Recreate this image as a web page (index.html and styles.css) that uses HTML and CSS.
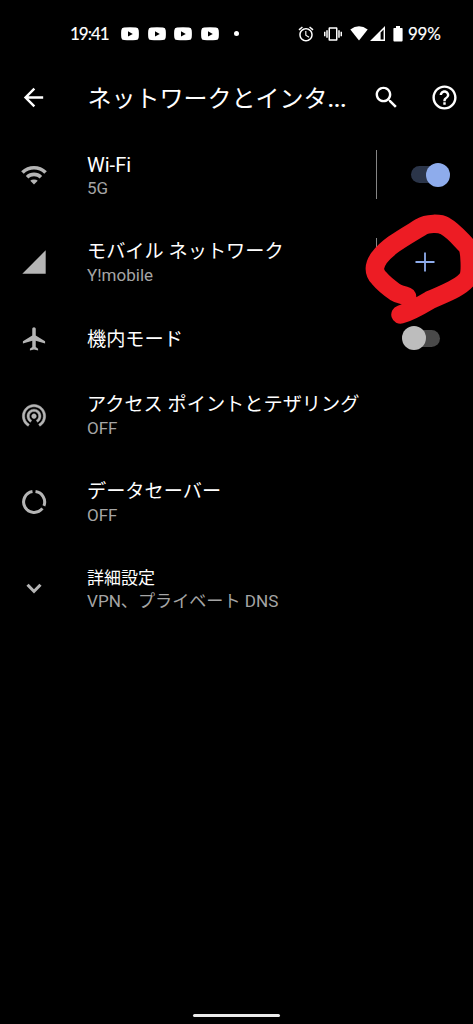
FILE: index.html
```
<!DOCTYPE html>
<html lang="ja">
<head>
<meta charset="utf-8">
<title>ネットワークとインターネット</title>
<link rel="stylesheet" href="styles.css">
</head>
<body>
<div class="screen">
  <header class="status">
    <span class="clock">19:41</span>
    <div class="notices">
      <svg class="video" viewBox="0 0 18 14"><path fill-rule="evenodd" d="M3 .6Q9 0 15 .6Q17.5.8 17.7 3.2Q18.1 7 17.7 10.4Q17.5 12.9 15 13.1Q9 13.6 3 13.1Q.5 12.9.3 10.4Q-.1 7 .3 3.2Q.5.8 3 .6ZM7 4.2V9.6L11.8 6.9Z"/></svg>
      <svg class="video" viewBox="0 0 18 14"><path fill-rule="evenodd" d="M3 .6Q9 0 15 .6Q17.5.8 17.7 3.2Q18.1 7 17.7 10.4Q17.5 12.9 15 13.1Q9 13.6 3 13.1Q.5 12.9.3 10.4Q-.1 7 .3 3.2Q.5.8 3 .6ZM7 4.2V9.6L11.8 6.9Z"/></svg>
      <svg class="video" viewBox="0 0 18 14"><path fill-rule="evenodd" d="M3 .6Q9 0 15 .6Q17.5.8 17.7 3.2Q18.1 7 17.7 10.4Q17.5 12.9 15 13.1Q9 13.6 3 13.1Q.5 12.9.3 10.4Q-.1 7 .3 3.2Q.5.8 3 .6ZM7 4.2V9.6L11.8 6.9Z"/></svg>
      <svg class="video" viewBox="0 0 18 14"><path fill-rule="evenodd" d="M3 .6Q9 0 15 .6Q17.5.8 17.7 3.2Q18.1 7 17.7 10.4Q17.5 12.9 15 13.1Q9 13.6 3 13.1Q.5 12.9.3 10.4Q-.1 7 .3 3.2Q.5.8 3 .6ZM7 4.2V9.6L11.8 6.9Z"/></svg>
    </div>
    <span class="dot"></span>
    <svg class="alarm" viewBox="0 0 24 24"><path d="M22 5.72l-4.6-3.86-1.29 1.53 4.6 3.86L22 5.72zM7.88 3.39L6.6 1.86 2 5.71l1.29 1.53 4.59-3.85zM12.5 8H11v6l4.75 2.85.75-1.23-4-2.37V8zM12 4c-4.97 0-9 4.03-9 9s4.02 9 9 9c4.97 0 9-4.03 9-9s-4.03-9-9-9zm0 16c-3.87 0-7-3.13-7-7s3.13-7 7-7 7 3.13 7 7-3.13 7-7 7z"/></svg>
    <svg class="vibrate" viewBox="0 0 24 24"><path d="M0 15h2V9H0v6zm3 2h2V7H3v10zm19-8v6h2V9h-2zm-3 8h2V7h-2v10zM16.5 3h-9C6.67 3 6 3.67 6 4.5v15c0 .83.67 1.5 1.5 1.5h9c.83 0 1.5-.67 1.5-1.5v-15c0-.83-.67-1.5-1.5-1.5zM16 19H8V5h8v14z"/></svg>
    <svg class="wifi-full" viewBox="0 0 18 15"><path d="M.3 3.5Q9-3 17.7 3.5L9 14.6Z"/></svg>
    <svg class="cell" viewBox="0 0 16 15"><path fill-rule="evenodd" d="M0 15L15 0V15ZM10.6 6.4V13.6H13.6V3.4Z"/></svg>
    <svg class="battery" viewBox="0 0 10 16"><path d="M3 0H7V2H9Q9.6 2 9.6 2.8V14.6Q9.6 15.5 8.7 15.5H1.3Q.4 15.5.4 14.6V2.8Q.4 2 1 2H3Z"/></svg>
    <span class="percent">99%</span>
  </header>

  <nav class="appbar">
    <svg class="icon back" viewBox="0 0 24 24"><path d="M20 11H7.83l5.59-5.59L12 4l-8 8 8 8 1.41-1.41L7.83 13H20v-2z"/></svg>
    <h1 class="title">ネットワークとインタ<span class="more">...</span></h1>
    <svg class="icon search" viewBox="0 0 24 24"><path d="M15.5 14h-.79l-.28-.27C15.41 12.59 16 11.11 16 9.5 16 5.91 13.09 3 9.5 3S3 5.91 3 9.5 5.91 16 9.5 16c1.61 0 3.09-.59 4.23-1.57l.27.28v.79l5 4.99L20.49 19l-4.99-5zm-6 0C7.01 14 5 11.99 5 9.5S7.01 5 9.5 5 14 7.01 14 9.5 11.99 14 9.5 14z"/></svg>
    <svg class="icon help" viewBox="0 0 24 24"><path d="M11 18h2v-2h-2v2zm1-16C6.48 2 2 6.48 2 12s4.48 10 10 10 10-4.48 10-10S17.52 2 12 2zm0 18c-4.41 0-8-3.59-8-8s3.59-8 8-8 8 3.59 8 8-3.59 8-8 8zm0-14c-2.21 0-4 1.79-4 4h2c0-1.1.9-2 2-2s2 .9 2 2c0 2-3 1.75-3 5h2c0-2.25 3-2.5 3-5 0-2.21-1.79-4-4-4z"/></svg>
  </nav>

  <main class="list">
    <section class="row">
      <svg class="icon lead" viewBox="0 0 24 24"><path d="M12 20.2L15.2 17Q14.2 15.8 12 15.8T8.800 17ZM1 8.700L3.200 10.900C8.100 6.100 15.900 6.100 20.800 10.900L23 8.700C16.900 2.700 7.100 2.700 1 8.700ZM5 12.800L7.200 15C9.900 12.400 14.100 12.400 16.800 15L19 12.800C15.100 9 8.900 9 5 12.800Z"/></svg>
      <div class="text"><div class="name latin">Wi-Fi</div><div class="sub">5G</div></div>
      <span class="divider"></span>
      <span class="switch on"><span class="knob"></span></span>
    </section>
    <section class="row mobile">
      <svg class="icon lead" viewBox="0 0 24 24"><path d="M2 22h20V2z"/></svg>
      <div class="text"><div class="name">モバイル ネットワーク</div><div class="sub">Y!mobile</div></div>
      <span class="divider"></span>
      <svg class="plus" viewBox="0 0 20 20"><path d="M10 .5V19.500M.5 10H19.500"/></svg>
      <svg class="scribble" viewBox="0 0 120 120"><path d="M54 91.500C48 89 47 90 42 87C35 82 31 79 26 73C20 67 21 60 26 53C35 41 50 33 68 22C74 18 87 18 92 21C101 26 107 34 114 41C117 46 118 67 115 73C108 83 90 89 77 95C67 101 59 106 47.500 109.500"/></svg>
    </section>
    <section class="row short">
      <svg class="icon lead" viewBox="0 0 24 24"><path d="M21.500 15.900v-2l-8-5V3.400c0-.83-.67-1.500-1.500-1.500s-1.500.67-1.500 1.500v5.500l-8 5v2l8-2.500v5.500l-2 1.500v1.500l3.500-1 3.500 1v-1.500l-2-1.500v-5.500l8 2.500z"/></svg>
      <div class="text"><div class="name">機内モード</div></div>
      <span class="switch off"><span class="knob"></span></span>
    </section>
    <section class="row">
      <svg class="icon lead" viewBox="0 0 24 24"><path d="M12 11c-1.100 0-2 .9-2 2s.9 2 2 2 2-.9 2-2-.9-2-2-2zm6 2c0-3.310-2.690-6-6-6s-6 2.690-6 6c0 2.220 1.210 4.150 3 5.190l1-1.740c-1.190-.7-2-1.970-2-3.450 0-2.210 1.790-4 4-4s4 1.790 4 4c0 1.480-.81 2.750-2 3.450l1 1.740c1.790-1.040 3-2.970 3-5.190zM12 3C6.480 3 2 7.480 2 13c0 3.700 2.010 6.920 4.990 8.650l1-1.730C5.610 18.530 4 15.960 4 13c0-4.420 3.580-8 8-8s8 3.580 8 8c0 2.960-1.610 5.530-4 6.920l1 1.730c2.990-1.730 5-4.950 5-8.650 0-5.520-4.480-10-10-10z" stroke="currentColor" stroke-width=".4"/></svg>
      <div class="text"><div class="name">アクセス ポイントとテザリング</div><div class="sub">OFF</div></div>
    </section>
    <section class="row">
      <svg class="icon lead ring" viewBox="0 0 24 24"><path d="M13.300 3.080A9 9 0 0 1 20.500 15.300M19.200 17.500A9 9 0 1 1 10.700 3.080"/></svg>
      <div class="text"><div class="name">データセーバー</div><div class="sub">OFF</div></div>
    </section>
    <section class="row">
      <svg class="icon lead" viewBox="0 0 24 24"><path d="M16.590 7.590L12 12.170 7.410 7.590 5.500 9.300l6.500 6.500 6.500-6.500z"/></svg>
      <div class="text advanced"><div class="name">詳細設定</div><div class="sub">VPN、プライベート DNS</div></div>
    </section>
  </main>
  <footer class="gesture"><span class="pill"></span></footer>
</div>
</body>
</html>
```

FILE: styles.css
```
* { box-sizing: border-box; }
body { margin: 0; background: #000; color: #fff; font-family: Roboto, "Noto Sans CJK JP", sans-serif; }
svg { display: block; flex: none; fill: currentColor; }
.screen { width: 473px; height: 1024px; display: flex; flex-direction: column; overflow: hidden; }

.status { height: 67px; padding-left: 70px; display: flex; align-items: center; font: 17px/20px Lato, Roboto, sans-serif; -webkit-text-stroke: .15px #fff; }
.clock { width: 51px; letter-spacing: -1px; }
.notices { display: flex; gap: 8.700px; }
.video { width: 18px; height: 14px; }
.dot { width: 5px; height: 5px; border-radius: 50%; background: #fff; margin-left: 15px; }
.alarm { width: 18px; height: 18px; margin-left: 58px; }
.vibrate { width: 18px; height: 18px; margin-left: 9px; }
.wifi-full { width: 18px; height: 15px; margin-left: 8px; }
.cell { width: 16px; height: 15px; margin-left: 2px; }
.battery { width: 10px; height: 16px; margin-left: 7px; }
.percent { margin-left: 5px; letter-spacing: -.3px; }

.icon { width: 29px; height: 29px; }
.appbar { height: 60px; margin-bottom: 4px; padding: 0 14px 0 19px; display: flex; align-items: center; }
.title { width: 261px; margin: 0 0 0 39.500px; padding-top: 4px; font-size: 24px; font-weight: 400; line-height: 36px; white-space: nowrap; }
.more { font-weight: 500; letter-spacing: -.4px; }
.search { margin-left: 24px; }
.help { margin-left: 29px; }

.row { height: 87px; padding-left: 20px; display: flex; align-items: center; position: relative; }
.row.mobile { height: 88px; }
.row.short { height: 65px; }
.lead { color: #b5b5b5; width: 28px; height: 28px; }
.ring { fill: none; stroke: currentColor; stroke-width: 2.600; }
.text { width: 289px; margin-left: 39px; white-space: nowrap; }
.name { font-size: 19.200px; line-height: 24px; padding-top: 2px; }
.latin { font-size: 20px; }
.sub { font-size: 17px; line-height: 22px; color: #a5a5a5; }
.advanced { padding-bottom: 2px; }
.advanced .name { font-size: 17px; }
.advanced .sub { font-size: 17.100px; }
.divider { width: 1px; height: 49px; background: #858585; }

.switch { position: relative; height: 17px; border-radius: 9px; }
.knob { position: absolute; top: -3.500px; width: 24px; height: 24px; border-radius: 50%; }
.on { width: 36px; margin-left: 34px; background: #2b3549; }
.on .knob { right: -3px; background: #8eacec; }
.off { width: 36px; margin-left: 28px; background: #494949; }
.off .knob { left: -2px; background: #bdbdbd; }
.row.short .switch { margin-top: -1px; }
.plus { width: 20px; height: 20px; margin-left: 38px; fill: none; stroke: #8eacec; stroke-width: 1.800; }
.scribble { position: absolute; left: 353px; top: -13px; width: 120px; height: 120px; z-index: 1; fill: none; stroke: #ed1c24; stroke-width: 18.500; stroke-linecap: round; stroke-linejoin: round; }

.gesture { margin-top: auto; height: 10px; display: flex; justify-content: center; }
.pill { width: 87px; height: 3px; border-radius: 2px; background: #ececec; }
```
